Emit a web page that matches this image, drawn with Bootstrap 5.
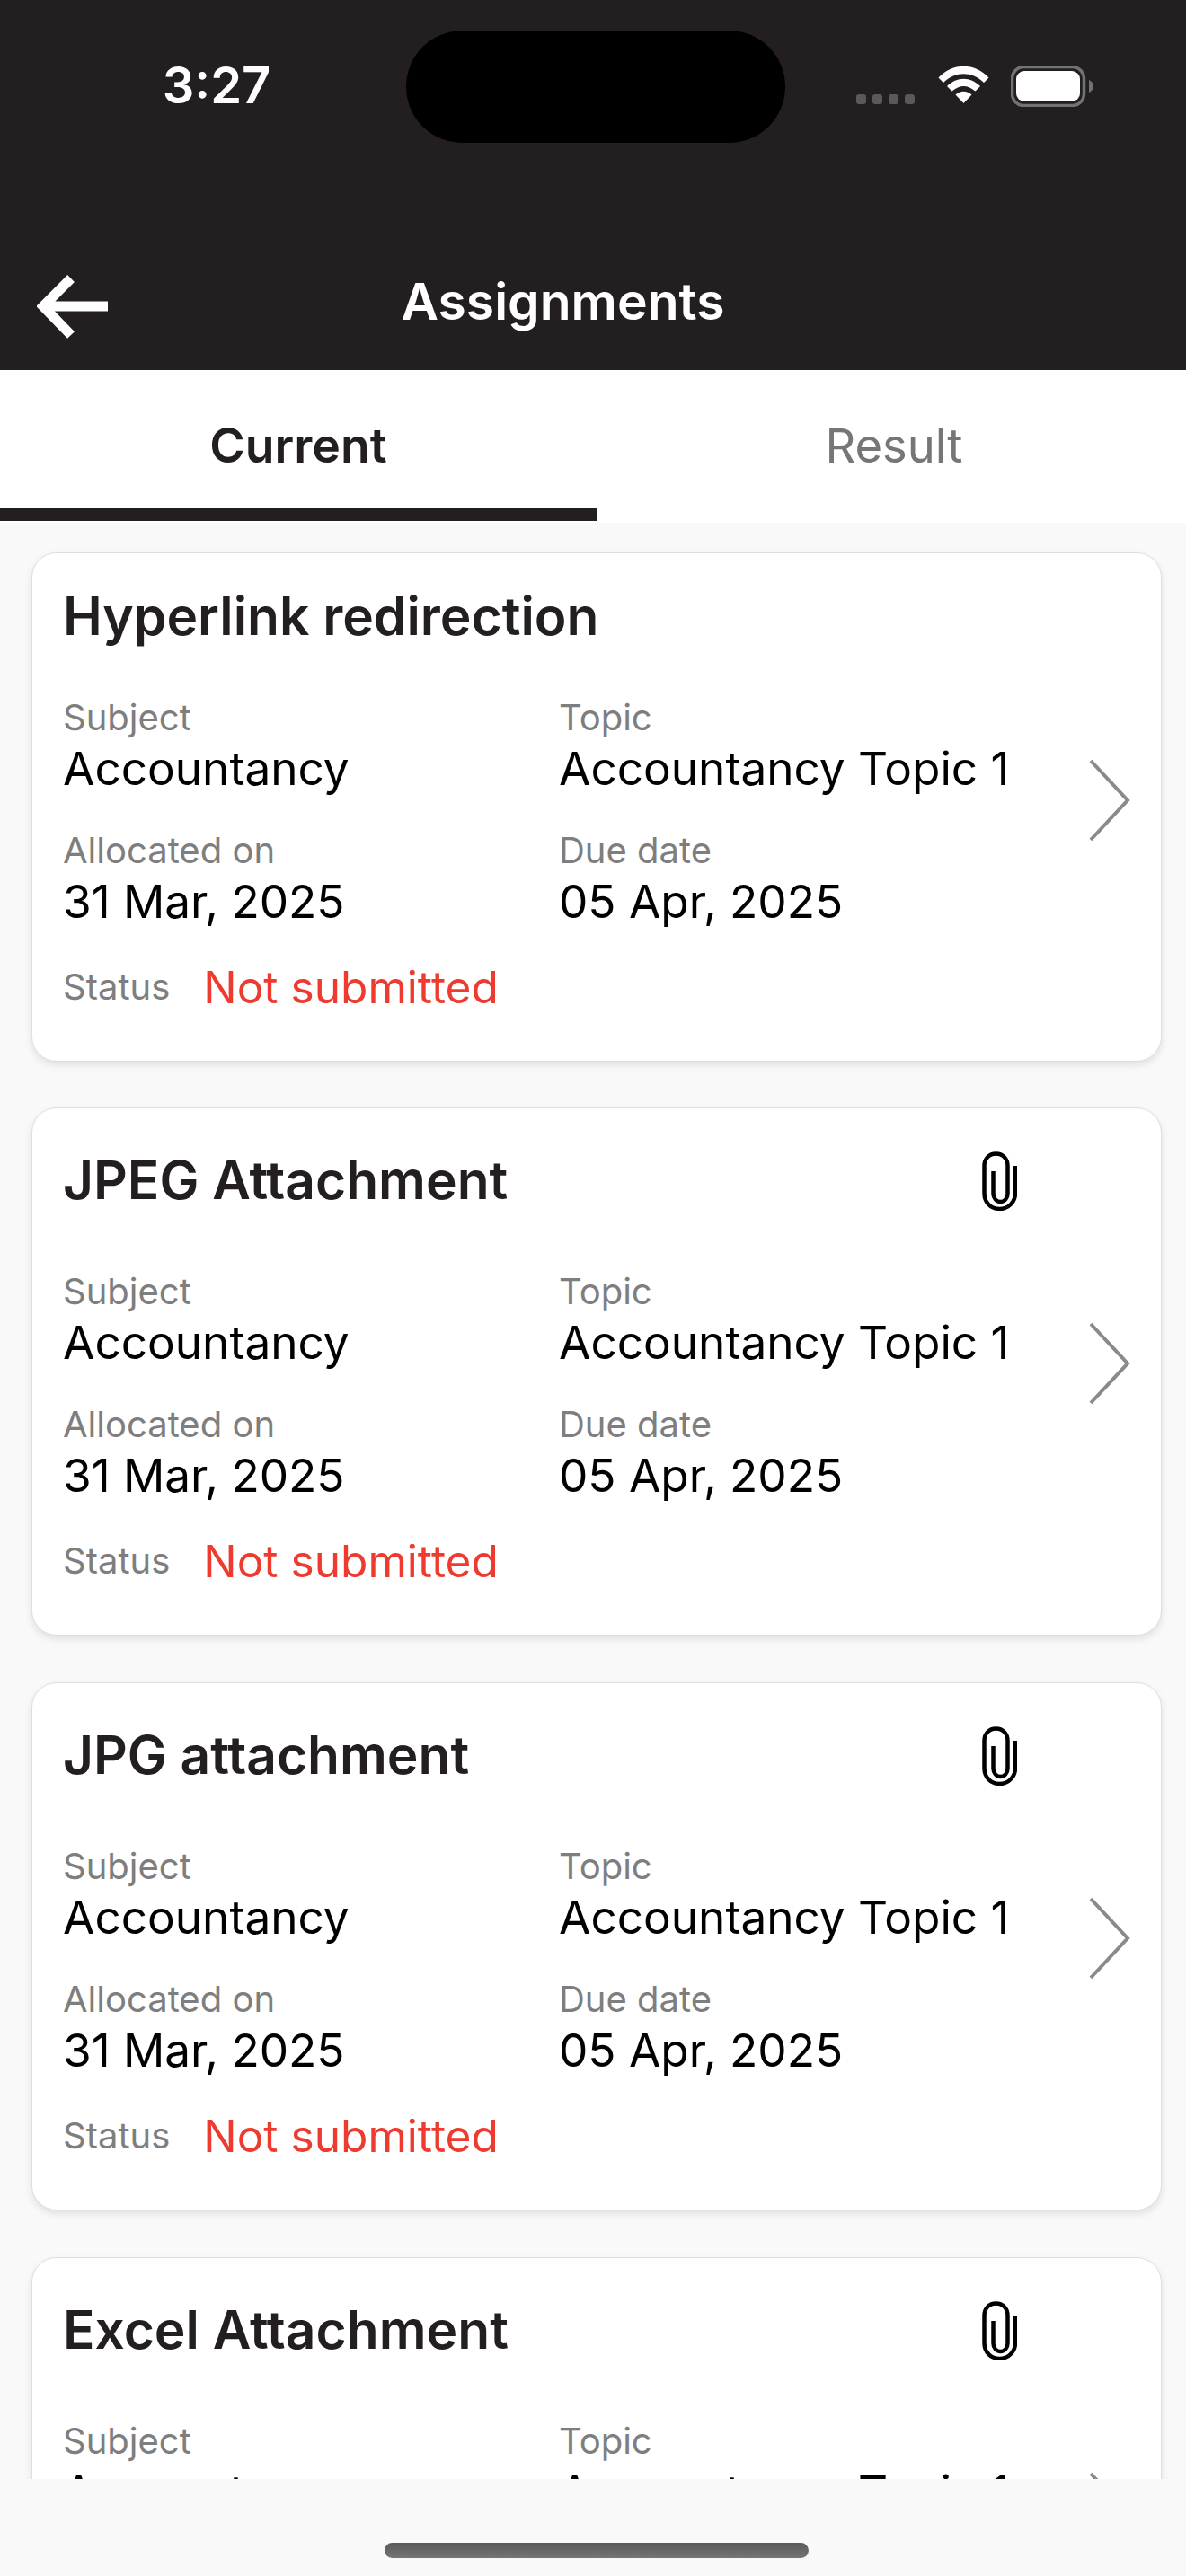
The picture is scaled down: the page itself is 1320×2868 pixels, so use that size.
<!DOCTYPE html>
<html lang="en">
<head>
<meta charset="utf-8">
<title>Assignments</title>
<link href="https://cdn.jsdelivr.net/npm/bootstrap@5.3.0/dist/css/bootstrap.min.css" rel="stylesheet">
<style>
html,body{margin:0;background:#f9f9f9;}
body{font-family:Inter,"Liberation Sans",sans-serif;color:#231f20;}
.phone{width:1320px;height:2868px;overflow:hidden;background:#f9f9f9;display:flex;flex-direction:column;}
.topbar{background:#231f20;height:412px;color:#fff;flex:none;}
.statusrow{height:159px;padding-top:34px;align-items:flex-start;}
.clock{width:452px;padding:27px 64px 0 94px;font-size:56px;font-weight:600;line-height:68px;text-align:center;}
.island{width:422px;height:125px;border-radius:63px;background:#000;flex:none;}
.sysicons{padding-left:79px;padding-top:39px;align-items:flex-start;}
.dots{display:flex;gap:7px;padding-top:32px;margin-right:26px;}
.dots i{display:block;width:11px;height:11px;border-radius:3px;background:#5a5a5a;}
.navrow{height:253px;position:relative;align-items:flex-start;}
.back{margin-left:41px;margin-top:147px;}
.pagetitle{flex:1;margin:143px 0 0;padding-right:188px;text-align:center;font-size:57px;font-weight:600;line-height:68px;}
.tabbar{height:170px;background:#fff;flex:none;}
.tabitem{height:170px;font-size:52.5px;line-height:64px;padding-top:52px;text-align:center;position:relative;color:#767676;}
.tabitem.on{width:664px;color:#231f20;font-weight:600;font-size:53.5px;}
.tabitem.off{width:656px;padding-left:6px;}
.tabitem.on::after{content:"";position:absolute;left:0;right:0;bottom:2px;height:14px;background:#231f20;}
.listarea{height:2178px;overflow:hidden;padding:33px 27px 0 35px;flex:none;}
.taskcard{border:1px solid #dedede;border-radius:28px;background:#fff;box-shadow:0 4px 8px rgba(0,0,0,.10);padding:0 34px;position:relative;}
.taskcard.first{margin-bottom:51px;padding-bottom:50px;}
.taskcard.other{margin-bottom:52px;padding-bottom:50px;}
.first .titlerow{margin-top:34px;}
.other .titlerow{margin-top:44px;}
.tasktitle{font-size:58.7px;font-weight:600;line-height:72px;margin:0;color:#231f20;}
.clip{position:absolute;left:1057px;top:48px;}
.first .info{margin-top:53px;}
.other .info{margin-top:64px;}
.cell{width:552px;flex:none;}
.inforow{display:flex;height:148px;}
.inforow.two{height:144px;}
.lbl{font-size:40px;line-height:48px;color:#7e7e7e;}
.val{font-size:51.3px;line-height:64px;color:#000;}
.statusline{align-items:center;gap:37px;}
.statusline .red{font-size:49.6px;line-height:64px;color:#ee3a2f;}
.chev{position:absolute;left:1176px;}
.first .chev{top:229px;}
.other .chev{top:238px;}
.homebar{height:108px;flex:none;position:relative;background:#f9f9f9;}
.homepill{position:absolute;left:428px;top:71px;width:472px;height:17px;border-radius:9px;background:linear-gradient(#5a5a5a,#757575);}
</style>
</head>
<body>
<div class="phone">
  <div class="topbar">
    <div class="d-flex statusrow">
      <div class="clock">3:27</div>
      <div class="island"></div>
      <div class="d-flex sysicons">
        <div class="dots"><i></i><i></i><i></i><i></i></div>
        <svg width="57" height="43" viewBox="0 0 57 43" class="me-4"><path fill="#fff" d="M0.5 13.5C16 -3.5 41 -3.5 56.5 13.5L51 19C38 6 19 6 6 19Z"/><path fill="#fff" d="M10 23C21 12 36 12 47 23L41.5 28.5C33 21 24 21 15.5 28.5Z"/><path fill="#fff" d="M19.5 32.5C25 27.5 32 27.5 37.5 32.5L28.500 42Z"/></svg>
        <svg width="93" height="46" viewBox="0 0 93 46" class="batt"><rect x="1.5" y="1.5" width="80" height="43" rx="13" fill="none" stroke="#737373" stroke-width="3.5"/><rect x="6" y="6" width="71" height="34" rx="9" fill="#fff"/><path d="M87 16C91 18 92 21 92 23C92 25 91 28 87 30Z" fill="#737373"/></svg>
      </div>
    </div>
    <div class="navrow d-flex">
      <svg class="back" width="80" height="72" viewBox="0 0 80 72"><path d="M38 4L7 35L38 67M7 35H79" fill="none" stroke="#fff" stroke-width="11"/></svg>
      <h1 class="pagetitle">Assignments</h1>
    </div>
  </div>
  <div class="tabbar d-flex">
    <div class="tabitem on">Current</div>
    <div class="tabitem off">Result</div>
  </div>
  <div class="listarea">

    <div class="taskcard first">
      <div class="titlerow d-flex"><h2 class="tasktitle">Hyperlink redirection</h2></div>
      <div class="info">
        <div class="inforow"><div class="cell"><div class="lbl">Subject</div><div class="val">Accountancy</div></div><div class="cell"><div class="lbl">Topic</div><div class="val">Accountancy Topic 1</div></div></div>
        <div class="inforow two"><div class="cell"><div class="lbl">Allocated on</div><div class="val">31 Mar, 2025</div></div><div class="cell"><div class="lbl">Due date</div><div class="val">05 Apr, 2025</div></div></div>
        <div class="statusline d-flex"><span class="lbl">Status</span><span class="red">Not submitted</span></div>
      </div>
      <svg class="chev" width="46" height="92" viewBox="0 0 46 92"><path d="M2 2L43 46L2 90" fill="none" stroke="#8a8a8a" stroke-width="4"/></svg>
    </div>

    <div class="taskcard other">
      <div class="titlerow d-flex"><h2 class="tasktitle">JPEG Attachment</h2></div>
      <svg class="clip" width="39" height="66" viewBox="0 0 39 66"><path d="M37 16V46.500C37 56.500 29 64 19.500 64C9.500 64 2.500 56.500 2.500 46.500V16C2.500 8 8 2.500 15.500 2.500C23 2.500 28.500 8 28.500 16V47C28.500 52 25 56 20.500 56C16 56 12.500 52 12.500 47V22" fill="none" stroke="#000" stroke-width="4.500"/></svg>
      <div class="info">
        <div class="inforow"><div class="cell"><div class="lbl">Subject</div><div class="val">Accountancy</div></div><div class="cell"><div class="lbl">Topic</div><div class="val">Accountancy Topic 1</div></div></div>
        <div class="inforow two"><div class="cell"><div class="lbl">Allocated on</div><div class="val">31 Mar, 2025</div></div><div class="cell"><div class="lbl">Due date</div><div class="val">05 Apr, 2025</div></div></div>
        <div class="statusline d-flex"><span class="lbl">Status</span><span class="red">Not submitted</span></div>
      </div>
      <svg class="chev" width="46" height="92" viewBox="0 0 46 92"><path d="M2 2L43 46L2 90" fill="none" stroke="#8a8a8a" stroke-width="4"/></svg>
    </div>

    <div class="taskcard other">
      <div class="titlerow d-flex"><h2 class="tasktitle">JPG attachment</h2></div>
      <svg class="clip" width="39" height="66" viewBox="0 0 39 66"><path d="M37 16V46.500C37 56.500 29 64 19.500 64C9.500 64 2.500 56.500 2.500 46.500V16C2.500 8 8 2.500 15.500 2.500C23 2.500 28.500 8 28.500 16V47C28.500 52 25 56 20.500 56C16 56 12.500 52 12.500 47V22" fill="none" stroke="#000" stroke-width="4.500"/></svg>
      <div class="info">
        <div class="inforow"><div class="cell"><div class="lbl">Subject</div><div class="val">Accountancy</div></div><div class="cell"><div class="lbl">Topic</div><div class="val">Accountancy Topic 1</div></div></div>
        <div class="inforow two"><div class="cell"><div class="lbl">Allocated on</div><div class="val">31 Mar, 2025</div></div><div class="cell"><div class="lbl">Due date</div><div class="val">05 Apr, 2025</div></div></div>
        <div class="statusline d-flex"><span class="lbl">Status</span><span class="red">Not submitted</span></div>
      </div>
      <svg class="chev" width="46" height="92" viewBox="0 0 46 92"><path d="M2 2L43 46L2 90" fill="none" stroke="#8a8a8a" stroke-width="4"/></svg>
    </div>

    <div class="taskcard other">
      <div class="titlerow d-flex"><h2 class="tasktitle">Excel Attachment</h2></div>
      <svg class="clip" width="39" height="66" viewBox="0 0 39 66"><path d="M37 16V46.500C37 56.500 29 64 19.500 64C9.500 64 2.500 56.500 2.500 46.500V16C2.500 8 8 2.500 15.500 2.500C23 2.500 28.500 8 28.500 16V47C28.500 52 25 56 20.500 56C16 56 12.500 52 12.500 47V22" fill="none" stroke="#000" stroke-width="4.500"/></svg>
      <div class="info">
        <div class="inforow"><div class="cell"><div class="lbl">Subject</div><div class="val">Accountancy</div></div><div class="cell"><div class="lbl">Topic</div><div class="val">Accountancy Topic 1</div></div></div>
        <div class="inforow two"><div class="cell"><div class="lbl">Allocated on</div><div class="val">31 Mar, 2025</div></div><div class="cell"><div class="lbl">Due date</div><div class="val">05 Apr, 2025</div></div></div>
        <div class="statusline d-flex"><span class="lbl">Status</span><span class="red">Not submitted</span></div>
      </div>
      <svg class="chev" width="46" height="92" viewBox="0 0 46 92"><path d="M2 2L43 46L2 90" fill="none" stroke="#8a8a8a" stroke-width="4"/></svg>
    </div>

  </div>
  <div class="homebar"><div class="homepill"></div></div>
</div>
<script src="https://cdn.jsdelivr.net/npm/bootstrap@5.3.0/dist/js/bootstrap.bundle.min.js"></script>
</body>
</html>
